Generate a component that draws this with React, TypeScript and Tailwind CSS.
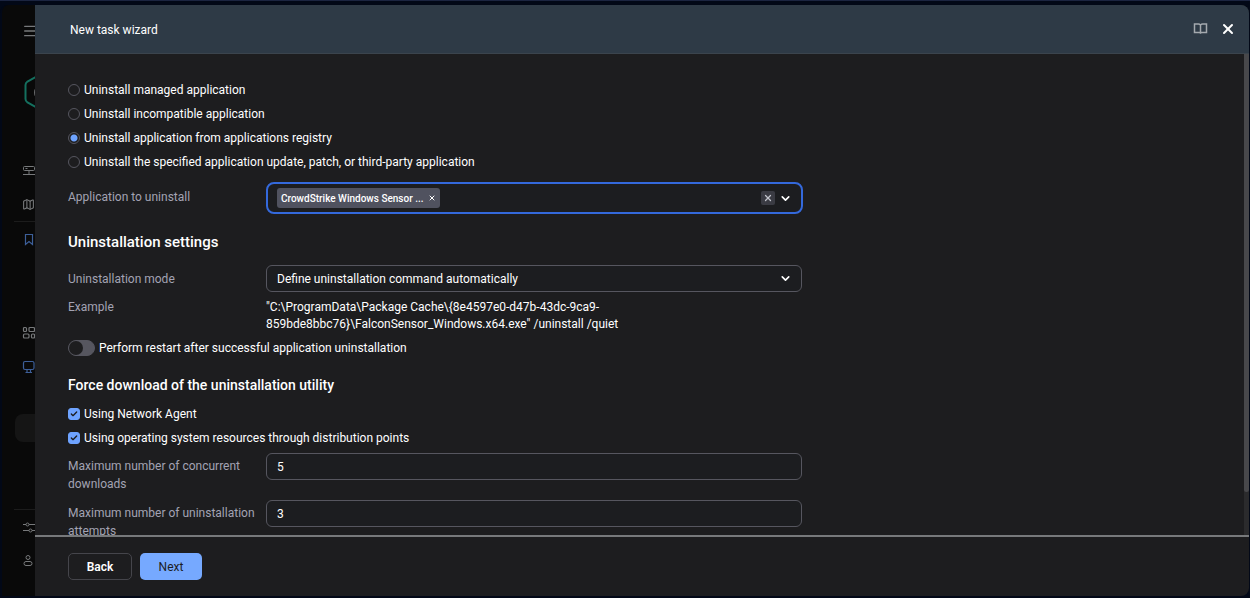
import React, { useState } from 'react';
import { Check, ChevronDown, Map, Menu, X } from 'lucide-react';

const methods = [
  'Uninstall managed application',
  'Uninstall incompatible application',
  'Uninstall application from applications registry',
  'Uninstall the specified application update, patch, or third-party application',
];

const fieldClass =
  'h-[27px] w-full rounded-md border border-[#56565f] bg-[#1c1d20] px-2.5 text-white outline-none';

const Sidebar: React.FC = () => (
  <nav aria-label="Main" className="flex w-[35px] shrink-0 flex-col overflow-hidden rounded-tl-lg border-l-2 border-[#020817] bg-[#090909] text-[#77797b]">
    <button aria-label="Menu" className="ml-5 mt-[18px] w-4 shrink-0">
      <Menu size={16} strokeWidth={2} />
    </button>
    <svg className="ml-[22px] mt-[33px] h-10 w-9 shrink-0" viewBox="0 0 36 40" fill="none">
      <path d="M18 1.500 3.500 9.500Q1.500 11 1.500 13v14q0 2 2 3.500L18 38.500l14.500-8q2-1.500 2-3.500V13q0-2-2-3.500Z" stroke="#14705f" strokeWidth="2" />
      <path d="M14 16q-3 0-3 4.500t3 4.500" stroke="#8a8d8f" strokeWidth="1.500" />
    </svg>
    <a href="#servers" aria-label="Servers" className="ml-5 mt-13 shrink-0">
      <svg width="14" height="14" viewBox="0 0 14 14" fill="none" stroke="currentColor">
        <rect x="1.500" y="2.500" width="11" height="4" rx="1" />
        <path d="M3.500 4.500h2M7 6.500v4M1 10.500h12" />
      </svg>
    </a>
    <a href="#map" aria-label="Map" className="ml-5 mt-5 shrink-0">
      <Map size={13} strokeWidth={2} />
    </a>
    <hr className="ml-3 mt-2.5 w-full border-[#1c1c1c]" />
    <a href="#bookmarks" aria-label="Bookmarks" className="ml-5 mt-2.5 shrink-0 text-[#3d5f99]">
      <svg width="14" height="14" viewBox="0 0 14 14" fill="none" stroke="currentColor" strokeWidth="1.200">
        <path d="M3.500 2.500h7v10L7 9.500l-3.500 3Z" />
      </svg>
    </a>
    <a href="#apps" aria-label="Applications" className="ml-5 mt-20 shrink-0">
      <svg width="14" height="14" viewBox="0 0 14 14" fill="none" stroke="currentColor" strokeWidth="1.200">
        <rect x="1.500" y="1.500" width="3" height="4" rx="1" />
        <rect x="7" y="1.500" width="5.500" height="4" rx="1" />
        <rect x="1.500" y="8" width="5.500" height="4" rx="1" />
        <rect x="9.500" y="8" width="3" height="4" rx="1" />
      </svg>
    </a>
    <a href="#devices" aria-label="Devices" className="ml-5 mt-5 shrink-0 text-[#3d5f99]">
      <svg width="14" height="14" viewBox="0 0 14 14" fill="none" stroke="currentColor" strokeWidth="1.200">
        <rect x="1.500" y="1.500" width="10.500" height="8" rx="1.500" />
        <path d="M5 9.500v3M8.500 9.500v3M3.500 12.500h6.500" />
      </svg>
    </a>
    <div className="ml-[13px] mt-10 h-7 w-full shrink-0 rounded-lg bg-[#151515]" />
    <hr className="ml-3 mt-auto w-full border-[#1c1c1c]" />
    <a href="#settings" aria-label="Settings" className="ml-5 mt-2.5 shrink-0">
      <svg width="14" height="14" viewBox="0 0 14 14" fill="none" stroke="currentColor">
        <path d="M1 4.500h3M7 4.500h6M1 10.500h6M10 10.500h4" />
        <circle cx="5.500" cy="4.500" r="1.500" />
        <circle cx="8.500" cy="10.500" r="1.500" />
      </svg>
    </a>
    <a href="#account" aria-label="Account" className="mb-7 ml-5 mt-5 shrink-0">
      <svg width="14" height="14" viewBox="0 0 14 14" fill="none" stroke="currentColor">
        <circle cx="6" cy="3.500" r="2" />
        <rect x="2" y="7.500" width="8" height="4" rx="2" />
      </svg>
    </a>
  </nav>
);

interface CheckRowProps {
  label: string;
  checked: boolean;
  onChange: (value: boolean) => void;
}

const CheckRow: React.FC<CheckRowProps> = ({ label, checked, onChange }) => (
  <label className="flex h-6 items-center gap-1">
    <span className="grid size-3 place-items-center">
      <input
        type="checkbox"
        checked={checked}
        onChange={(e) => onChange(e.target.checked)}
        className="col-start-1 row-start-1 size-3 appearance-none rounded-[3px] border border-[#56565f] checked:border-[#6ea3ff] checked:bg-[#6ea3ff]"
      />
      {checked && <Check size={8} strokeWidth={4} className="pointer-events-none col-start-1 row-start-1 text-[#1d1d1f]" />}
    </span>
    {label}
  </label>
);

const App: React.FC = () => {
  const [method, setMethod] = useState(2);
  const [restart, setRestart] = useState(false);
  const [useAgent, setUseAgent] = useState(true);
  const [usePoints, setUsePoints] = useState(true);

  return (
    <div className="flex h-screen flex-col border-t border-[#1b2440] bg-[#020817] pb-0.5 pr-px pt-1 font-['Roboto','Liberation_Sans',sans-serif] text-[12px] text-white">
      <div className="flex min-h-0 flex-1">
        <Sidebar />
        <section role="dialog" aria-labelledby="wizard-title" className="flex min-w-0 flex-1 flex-col overflow-hidden rounded-r-lg bg-[#1d1d1f]">
          <header className="flex h-[49px] shrink-0 items-center border-b border-[#3b444d] bg-[#2e3a46] pl-[35px] pr-[13px]">
            <h1 id="wizard-title" className="flex-1 pt-0.5">New task wizard</h1>
            <button aria-label="Help" className="mr-3 text-[#a4a9ae]">
              <svg width="15" height="15" viewBox="0 0 15 15" fill="none" stroke="currentColor" strokeWidth="1.500">
                <path d="M7.500 3q-1-1-2-1h-4v8.500h4.500q1 0 1.500.500.500-.500 1.500-.500h4.500V2h-4q-1 0-2 1ZM7.500 3v8" />
              </svg>
            </button>
            <button aria-label="Close">
              <X size={16} strokeWidth={3} />
            </button>
          </header>

          <div className="flex min-h-0 flex-1">
            <main className="min-w-0 flex-1 overflow-hidden px-[33px] pt-6">
              <fieldset>
                {methods.map((name, i) => (
                  <label key={name} className="flex h-6 items-center gap-1">
                    <input
                      type="radio"
                      name="method"
                      checked={method === i}
                      onChange={() => setMethod(i)}
                      className="size-3 appearance-none rounded-full border border-[#56565f] checked:bg-[radial-gradient(circle,#6ea3ff_3px,transparent_4px)]"
                    />
                    {name}
                  </label>
                ))}
              </fieldset>

              <div className="mt-2 grid max-w-[735px] grid-cols-[198px_1fr]">
                <label htmlFor="application" className="pt-1.5 leading-[18px] text-[#a3a3b3]">Application to uninstall</label>
                <div className="flex h-8 items-center rounded-lg border-2 border-[#3469dc] bg-[#1c1d20] px-[9px]">
                  <span className="flex h-5 shrink-0 items-center gap-1 rounded-[3px] bg-[#50525f] px-1 text-[10px] font-medium">
                    CrowdStrike Windows Sensor ...
                    <button aria-label="Remove application">
                      <X size={8} strokeWidth={3} />
                    </button>
                  </span>
                  <input id="application" className="min-w-0 flex-1 bg-transparent px-1 outline-none" />
                  <button aria-label="Clear" className="mr-1 flex size-3.5 items-center justify-center rounded-xs bg-[#3a3b43] text-[#c2c3cc]">
                    <X size={10} strokeWidth={3} />
                  </button>
                  <button aria-label="Open list">
                    <ChevronDown size={13} strokeWidth={3} />
                  </button>
                </div>
              </div>

              <h2 className="mt-[18px] text-[15px] font-medium leading-5">Uninstallation settings</h2>
              <div className="mt-[13px] grid max-w-[734px] grid-cols-[198px_1fr]">
                <label htmlFor="mode" className="pt-[5px] leading-[18px] text-[#a3a3b3]">Uninstallation mode</label>
                <div className="grid items-center">
                  <select id="mode" className={`${fieldClass} col-start-1 row-start-1 appearance-none`}>
                    <option>Define uninstallation command automatically</option>
                  </select>
                  <ChevronDown size={13} strokeWidth={3} className="pointer-events-none col-start-1 row-start-1 mr-2.5 justify-self-end" />
                </div>
              </div>
              <div className="mt-[7px] grid max-w-[734px] grid-cols-[198px_1fr] leading-[17px]">
                <span className="text-[#a3a3b3]">Example</span>
                <p>
                  "C:\ProgramData\Package Cache\{'{'}8e4597e0-d47b-43dc-9ca9-
                  <br />
                  859bde8bbc76{'}'}\FalconSensor_Windows.x64.exe" /uninstall /quiet
                </p>
              </div>

              <label className="mt-1.5 flex items-center gap-1">
                <input
                  type="checkbox"
                  role="switch"
                  checked={restart}
                  onChange={(e) => setRestart(e.target.checked)}
                  className="h-4 w-[27px] appearance-none rounded-full border border-[#56565f] bg-[#56565f] before:block before:size-3.5 before:rounded-full before:bg-[#1d1d1f] checked:bg-[#6ea3ff] checked:before:ml-auto"
                />
                Perform restart after successful application uninstallation
              </label>

              <h2 className="mt-[18px] text-[14px] font-medium leading-5">Force download of the uninstallation utility</h2>
              <div className="mt-[7px]">
                <CheckRow label="Using Network Agent" checked={useAgent} onChange={setUseAgent} />
                <CheckRow label="Using operating system resources through distribution points" checked={usePoints} onChange={setUsePoints} />
              </div>

              <div className="mt-[3px] grid max-w-[734px] grid-cols-[198px_1fr] gap-y-[7px]">
                <label htmlFor="downloads" className="pr-2 pt-1 leading-[18px] text-[#a3a3b3]">
                  Maximum number of concurrent downloads
                </label>
                <input id="downloads" defaultValue="5" className={fieldClass} />
                <label htmlFor="attempts" className="pr-2 pt-1 leading-[18px] text-[#a3a3b3]">
                  Maximum number of uninstallation attempts
                </label>
                <input id="attempts" defaultValue="3" className={fieldClass} />
              </div>
            </main>
            <div aria-hidden="true" className="w-[5px] shrink-0 bg-[#2b2b2d]">
              <div className="h-[91%] rounded-b-sm bg-[#48484b]" />
            </div>
          </div>

          <footer className="flex shrink-0 gap-2 border-t-2 border-[#77797b] px-[33px] py-4">
            <button className="h-[27px] w-16 rounded-[5px] border border-[#45454b] text-[12px] font-semibold">Back</button>
            <button className="h-[27px] w-[62px] rounded-[5px] bg-[#76a9ff] text-[12px] text-[#1d1d1f]">Next</button>
          </footer>
        </section>
      </div>
    </div>
  );
};

export default App;
